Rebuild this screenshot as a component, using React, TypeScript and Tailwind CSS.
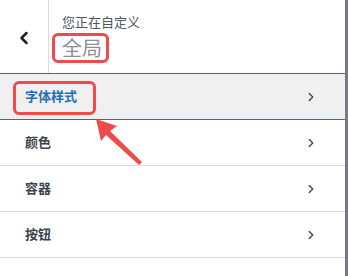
import { ChevronLeft, ChevronRight } from "lucide-react";

const items = ["字体样式", "颜色", "容器", "按钮"];

export default function App() {
  return (
    <div
      className="relative flex w-[348px] h-[276px] bg-white overflow-hidden"
      style={{ fontFamily: '"Noto Sans", "Noto Sans CJK SC", sans-serif' }}
    >
      <div className="flex-1 flex flex-col">
        {/* header */}
        <div className="flex h-[74px] border-b border-[#2271b1] bg-white">
          <div className="w-[49px] border-r border-[#dcdcde] flex items-center justify-center pt-[2px]">
            <ChevronLeft className="w-[20px] h-[20px] text-[#1d2327]" strokeWidth={3} />
          </div>
          <div className="pl-[13px] pt-[12px] flex flex-col">
            <span className="text-[13px] leading-[20px] text-[#50575e]">您正在自定义</span>
            <span className="text-[20px] leading-[28px] text-[#8c8f94] mt-[3px]">全局</span>
          </div>
        </div>

        {/* sections */}
        {items.map((label, i) => (
          <div
            key={label}
            className={
              i === 0
                ? "flex items-center justify-between h-[46px] pl-[25px] pr-[27px] bg-[#f0f0f1] border-b border-[#2271b1]"
                : "flex items-center justify-between h-[46px] pl-[25px] pr-[27px] bg-white border-b border-[#dcdcde]"
            }
          >
            <span
              className={
                i === 0
                  ? "text-[13px] font-semibold text-[#2271b1]"
                  : "text-[13px] font-semibold text-[#3c434a]"
              }
            >
              {label}
            </span>
            <ChevronRight className="w-[14px] h-[14px] text-[#3c434a]" strokeWidth={2.25} />
          </div>
        ))}
      </div>
      <div className="w-[3px] bg-[#787c82]" />

      {/* annotations */}
      <div className="absolute left-[52px] top-[33px] w-[57px] h-[30px] border-[3px] border-[#f04b4b] rounded-[6px]" />
      <div className="absolute left-[13px] top-[81px] w-[83px] h-[34px] border-[3px] border-[#f04b4b] rounded-[6px]" />
      <svg className="absolute left-0 top-0" width="348" height="276" viewBox="0 0 348 276">
        <polygon
          points="96,119 117,126 110,131 142,162 139,165 106,135 101,141"
          fill="#f04b4b"
        />
      </svg>
    </div>
  );
}
